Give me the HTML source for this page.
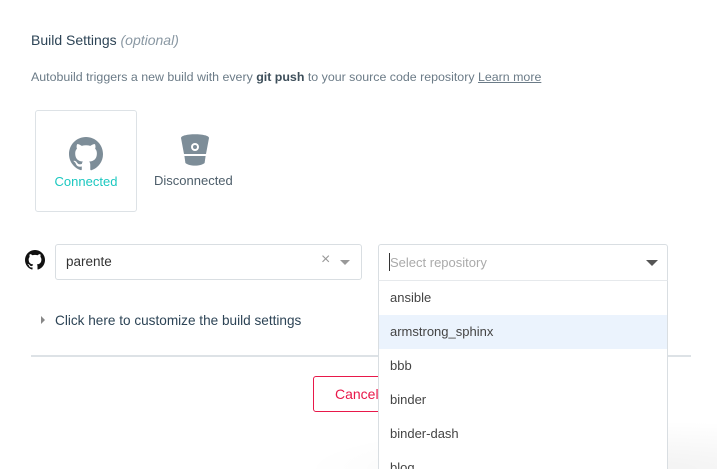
<!DOCTYPE html>
<html><head><style>
*{box-sizing:border-box;margin:0;padding:0}
html,body{width:717px;height:469px;overflow:hidden}
body{background:#fff;font-family:"Liberation Sans",sans-serif;position:relative;color:#394d5c}
.a{position:absolute}
</style></head><body>
<div class="a" style="left:31px;top:32px;font-size:14px;color:#2d4456">Build Settings <i style="color:#8a98a3">(optional)</i></div>
<div class="a" style="left:31px;top:70px;font-size:12.4px;color:#6b7b87;white-space:nowrap">Autobuild triggers a new build with every <b style="color:#3d4e5a">git push</b> to your source code repository <u>Learn more</u></div>
<div class="a" style="left:35px;top:110px;width:102px;height:102px;border:1px solid #dde2e6;border-radius:3px"></div>
<svg class="a" style="left:69px;top:137px" width="34" height="34" viewBox="0 0 16 16"><path fill="#7d8d98" d="M8 0C3.58 0 0 3.58 0 8c0 3.54 2.29 6.530 5.47 7.59.4.07.55-.17.55-.38v-1.33c-2.23.48-2.69-1.07-2.69-1.07-.36-.92-.89-1.17-.89-1.17-.73-.5.06-.49.06-.49.8.06 1.23.83 1.23.83.71 1.22 1.87.87 2.33.66.07-.52.28-.87.51-1.07-1.78-.2-3.65-.89-3.65-3.95 0-.87.31-1.59.82-2.15-.08-.2-.36-1.02.08-2.12 0 0 .67-.21 2.2.82.64-.18 1.32-.27 2-.27.68 0 1.36.09 2 .27 1.53-1.04 2.2-.82 2.2-.82.44 1.1.16 1.92.08 2.12.51.56.82 1.27.82 2.15 0 3.07-1.87 3.75-3.65 3.95.29.25.54.73.54 1.48v2.2c0 .21.15.46.55.38A8.013 8.013 0 0016 8c0-4.42-3.58-8-8-8z"/></svg>
<div class="a" style="left:35px;top:174px;width:102px;text-align:center;font-size:13px;color:#1cc8c0">Connected</div>
<svg class="a" style="left:181px;top:134px" width="28" height="32" viewBox="0 0 28 32"><path fill="#7d8d98" d="M0 4C0 -1 28 -1 28 4L25 20H3z"/><path fill="#7d8d98" d="M3.4 22h21.2l-1 7c-4 3.5-15.2 3.5-19.2 0z"/><circle cx="14" cy="13" r="4" fill="#fff"/><circle cx="14" cy="13" r="2" fill="#7d8d98"/></svg>
<div class="a" style="left:154px;top:173px;font-size:13px;color:#4d5e6a">Disconnected</div>
<svg class="a" style="left:25px;top:250px" width="20" height="20" viewBox="0 0 16 16"><path fill="#111" d="M8 0C3.58 0 0 3.58 0 8c0 3.54 2.29 6.53 5.47 7.59.4.07.55-.17.55-.38v-1.33c-2.23.48-2.69-1.07-2.69-1.07-.36-.92-.89-1.17-.89-1.17-.73-.5.06-.49.06-.49.8.06 1.23.83 1.23.83.71 1.22 1.87.87 2.33.66.07-.52.28-.87.51-1.07-1.78-.2-3.65-.89-3.65-3.95 0-.87.31-1.59.82-2.15-.08-.2-.36-1.02.08-2.12 0 0 .67-.21 2.2.82.64-.18 1.32-.27 2-.27.68 0 1.36.09 2 .27 1.53-1.04 2.2-.82 2.2-.82.44 1.1.16 1.92.08 2.12.51.56.82 1.27.82 2.15 0 3.07-1.87 3.75-3.65 3.95.29.25.54.73.54 1.48v2.2c0 .21.15.46.55.38A8.013 8.013 0 0016 8c0-4.42-3.58-8-8-8z"/></svg>
<div class="a" style="left:55px;top:244px;width:307px;height:36px;border:1px solid #d9dee2;border-radius:3px"></div>
<div class="a" style="left:66px;top:254px;font-size:13.5px;color:#333">parente</div>
<div class="a" style="left:321px;top:251px;font-size:16px;color:#999">×</div>
<div class="a" style="left:340px;top:260px;border:5px solid transparent;border-top:5px solid #999;border-bottom:0"></div>
<div class="a" style="left:378px;top:244px;width:290px;height:37px;border:1px solid #d9dee2;border-radius:3px 3px 0 0"></div>
<div class="a" style="left:389px;top:253px;width:1px;height:18px;background:#333"></div>
<div class="a" style="left:390px;top:255px;font-size:13px;color:#aaa">Select repository</div>
<div class="a" style="left:646px;top:260px;border:6px solid transparent;border-top:6px solid #555;border-bottom:0"></div>
<div class="a" style="left:41px;top:316px;border:4px solid transparent;border-left:4px solid #888;border-right:0"></div>
<div class="a" style="left:55px;top:313px;font-size:13.6px;color:#2d4456">Click here to customize the build settings</div>
<div class="a" style="left:31px;top:355px;width:660px;height:2px;background:#dde2e6"></div>
<div class="a" style="left:313px;top:376px;width:110px;height:36px;border:1px solid #e8184a;border-radius:3px;color:#e8184a;font-size:14px;padding:9px 0 0 21px">Cancel</div>
<div class="a" style="left:300px;top:420px;width:417px;height:49px;background:radial-gradient(ellipse at 80% 100%,rgba(0,0,0,.05),transparent 70%)"></div>
<div class="a" style="left:378px;top:280px;width:290px;height:189px;overflow:hidden;background:#fff;border-left:1px solid #d9dee2;border-right:1px solid #d9dee2;border-top:1px solid #e6e9ec;font-size:13px;color:#444">
<div style="height:34px;padding:9px 11px">ansible</div>
<div style="height:34px;padding:9px 11px;background:#ebf3fd">armstrong_sphinx</div>
<div style="height:34px;padding:9px 11px">bbb</div>
<div style="height:34px;padding:9px 11px">binder</div>
<div style="height:34px;padding:9px 11px">binder-dash</div>
<div style="height:34px;padding:9px 11px">blog</div>
</div>
</body></html>
